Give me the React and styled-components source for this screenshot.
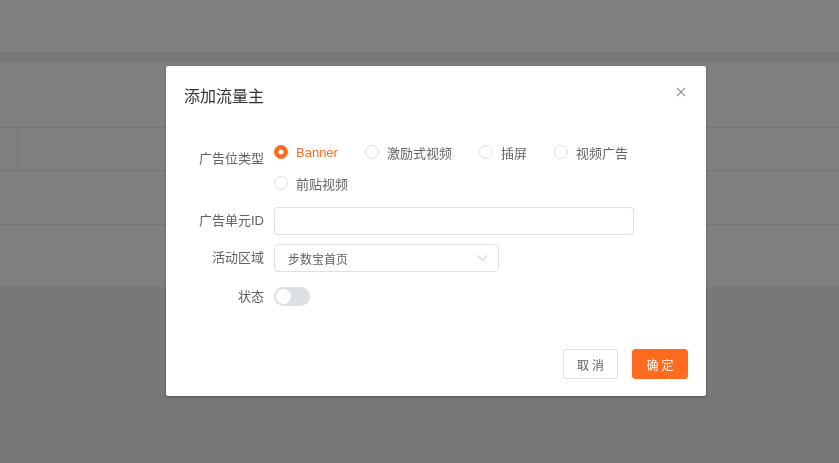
import React from "react";
import styled, { createGlobalStyle } from "styled-components";

const ORANGE = "#ff6b1f";

const Global = createGlobalStyle`
  html, body { margin: 0; padding: 0; }
  body {
    font-family: "Liberation Sans", "Noto Sans CJK SC", sans-serif;
    background: #eeeeee;
    -webkit-font-smoothing: antialiased;
  }
  * { box-sizing: border-box; }
`;

const Page = styled.div`
  width: 839px;
  height: 463px;
  display: flex;
  flex-direction: column;
  background: #eeeeee;
  overflow: hidden;
`;

const TopBar = styled.header`
  height: 52px;
  background: #ffffff;
`;

const Strip = styled.div`
  height: 10px;
  background: #f3f3f3;
`;

const Panel = styled.section`
  height: 225px;
  background: #ffffff;
  display: flex;
  flex-direction: column;
`;

const Toolbar = styled.div`
  height: 65px;
`;

const TableRow = styled.div`
  height: ${(p) => p.$h}px;
  border-top: 1px solid #e6e6e6;
  display: flex;
`;

const Cell = styled.div`
  width: ${(p) => (p.$w ? `${p.$w}px` : "auto")};
  flex: ${(p) => (p.$w ? "none" : "1")};
  border-right: ${(p) => (p.$divider ? "1px solid #e6e6e6" : "none")};
`;

const Overlay = styled.div`
  position: fixed;
  inset: 0;
  background: rgba(0, 0, 0, 0.5);
`;

const Dialog = styled.div`
  position: fixed;
  left: 166px;
  top: 66px;
  width: 540px;
  height: 330px;
  background: #ffffff;
  border-radius: 2px;
  box-shadow: 0 1px 3px rgba(0, 0, 0, 0.3);
  display: flex;
  flex-direction: column;
`;

const Header = styled.div`
  display: flex;
  justify-content: space-between;
  align-items: flex-start;
  padding: 19px 20px 0 18px;
`;

const Title = styled.span`
  font-size: 16px;
  line-height: 24px;
  color: #303133;
`;

const CloseBtn = styled.button`
  width: 10px;
  height: 10px;
  margin-top: 2px;
  padding: 0;
  border: none;
  background: none;
  display: flex;
  cursor: pointer;
`;

const Body = styled.div`
  padding: 34px 18px 0 18px;
  display: flex;
  flex-direction: column;
`;

const FormItem = styled.div`
  display: flex;
  align-items: flex-start;
  margin-top: ${(p) => p.$mt || 0}px;
  min-height: ${(p) => p.$h || 0}px;
`;

const Label = styled.label`
  width: 90px;
  flex: none;
  padding-right: 10px;
  text-align: right;
  font-size: 13px;
  line-height: ${(p) => p.$lh}px;
  color: #606266;
  white-space: nowrap;
`;

const Content = styled.div`
  width: 360px;
  display: flex;
  align-items: center;
  min-height: ${(p) => p.$h || 0}px;
`;

const RadioGroup = styled.div`
  width: 360px;
  display: flex;
  flex-wrap: wrap;
  column-gap: 27px;
  row-gap: 13px;
`;

const RadioItem = styled.label`
  display: inline-flex;
  align-items: center;
  height: 18px;
  font-size: 13px;
  white-space: nowrap;
  color: ${(p) => (p.$checked ? ORANGE : "#606266")};
  cursor: pointer;
`;

const RadioDot = styled.span`
  width: 14px;
  height: 14px;
  border-radius: 50%;
  margin-right: 8px;
  flex: none;
  position: relative;
  border: 1px solid ${(p) => (p.$checked ? ORANGE : "#dcdfe6")};
  background: ${(p) => (p.$checked ? ORANGE : "#ffffff")};
  &::after {
    content: "";
    position: absolute;
    left: 50%;
    top: 50%;
    width: 5px;
    height: 5px;
    border-radius: 50%;
    background: #ffffff;
    transform: translate(-50%, -50%);
    display: ${(p) => (p.$checked ? "block" : "none")};
  }
`;

const TextInput = styled.input`
  width: 360px;
  height: 28px;
  border: 1px solid #dcdfe6;
  border-radius: 4px;
  padding: 0 12px;
  font-size: 12px;
  font-family: inherit;
  color: #606266;
  outline: none;
`;

const SelectBox = styled.div`
  width: 225px;
  height: 28px;
  border: 1px solid #dcdfe6;
  border-radius: 4px;
  padding: 0 10px 0 13px;
  display: flex;
  align-items: center;
  justify-content: space-between;
  font-size: 12px;
  color: #606266;
`;

const Switch = styled.span`
  width: 36px;
  height: 19px;
  border-radius: 10px;
  background: #dcdfe6;
  display: flex;
  align-items: center;
  padding: 0 2px;
`;

const Knob = styled.span`
  width: 15px;
  height: 15px;
  border-radius: 50%;
  background: #ffffff;
`;

const Footer = styled.div`
  margin-top: auto;
  padding: 0 18px 17px 0;
  display: flex;
  justify-content: flex-end;
  gap: 14px;
`;

const Button = styled.button`
  height: 30px;
  width: ${(p) => p.$w}px;
  padding: 0;
  border-radius: 3px;
  font-size: 12px;
  font-family: inherit;
  border: 1px solid ${(p) => (p.$primary ? ORANGE : "#dcdfe6")};
  background: ${(p) => (p.$primary ? ORANGE : "#ffffff")};
  color: ${(p) => (p.$primary ? "#ffffff" : "#606266")};
  letter-spacing: 3px;
  text-indent: 3px;
  cursor: pointer;
`;

const radios = ["Banner", "激励式视频", "插屏", "视频广告", "前贴视频"];

export default function App() {
  return (
    <>
      <Global />
      <Page>
        <TopBar />
        <Strip />
        <Panel>
          <Toolbar />
          <TableRow $h={43}>
            <Cell $w={18} $divider />
            <Cell />
          </TableRow>
          <TableRow $h={54}>
            <Cell />
          </TableRow>
          <TableRow $h={63}>
            <Cell />
          </TableRow>
        </Panel>
      </Page>
      <Overlay />
      <Dialog>
        <Header>
          <Title>添加流量主</Title>
          <CloseBtn aria-label="关闭">
            <svg width="10" height="10" viewBox="0 0 10 10">
              <path d="M1 1L9 9M9 1L1 9" stroke="#909399" strokeWidth="1.1" fill="none" />
            </svg>
          </CloseBtn>
        </Header>
        <Body>
          <FormItem>
            <Label $lh={32}>广告位类型</Label>
            <RadioGroup>
              {radios.map((r, i) => (
                <RadioItem key={r} $checked={i === 0}>
                  <RadioDot $checked={i === 0} />
                  {r}
                </RadioItem>
              ))}
            </RadioGroup>
          </FormItem>
          <FormItem $mt={15}>
            <Label $lh={28}>广告单元ID</Label>
            <Content>
              <TextInput />
            </Content>
          </FormItem>
          <FormItem $mt={9}>
            <Label $lh={28}>活动区域</Label>
            <Content>
              <SelectBox>
                <span>步数宝首页</span>
                <svg width="11" height="6" viewBox="0 0 11 6">
                  <path d="M0.5 0.5L5.5 5.2L10.5 0.5" stroke="#c0c4cc" strokeWidth="1" fill="none" />
                </svg>
              </SelectBox>
            </Content>
          </FormItem>
          <FormItem $mt={10}>
            <Label $lh={29}>状态</Label>
            <Content $h={29}>
              <Switch>
                <Knob />
              </Switch>
            </Content>
          </FormItem>
        </Body>
        <Footer>
          <Button $w={55}>取消</Button>
          <Button $w={56} $primary>确定</Button>
        </Footer>
      </Dialog>
    </>
  );
}
